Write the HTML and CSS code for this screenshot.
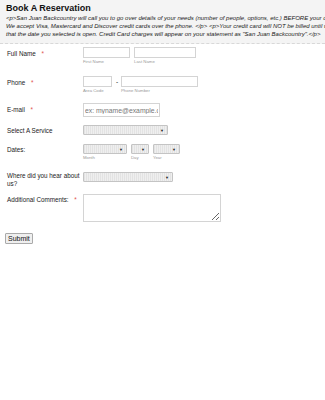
FILE: index.html
```html
<!DOCTYPE html>
<html>
<head>
<meta charset="utf-8">
<link rel="stylesheet" href="styles.css">
</head>
<body>
<div class="header">
  <h1 class="title">Book A Reservation</h1>
  <div class="desc">
    <div class="line">&lt;p&gt;San Juan Backcountry will call you to go over details of your needs (number of people, options, etc.) BEFORE your credit card is charged.</div>
    <div class="line">We accept Visa, Mastercard and Discover credit cards over the phone. &lt;/p&gt; &lt;p&gt;Your credit card will NOT be billed until we confirm</div>
    <div class="line">that the date you selected is open. Credit Card charges will appear on your statement as "San Juan Backcountry".&lt;/p&gt;</div>
  </div>
</div>
<form class="form">
  <div class="row r-name">
    <div class="label">Full Name <span class="req">*</span></div>
    <div class="field">
      <div class="sub"><input class="in in-first" type="text"><span class="sublabel">First Name</span></div>
      <div class="sub"><input class="in in-last" type="text"><span class="sublabel">Last Name</span></div>
    </div>
  </div>
  <div class="row r-phone">
    <div class="label">Phone <span class="req">*</span></div>
    <div class="field">
      <div class="sub"><input class="in in-area" type="text"><span class="sublabel">Area Code</span></div>
      <span class="dash">-</span>
      <div class="sub"><input class="in in-num" type="text"><span class="sublabel">Phone Number</span></div>
    </div>
  </div>
  <div class="row r-email">
    <div class="label">E-mail <span class="req">*</span></div>
    <div class="field">
      <input class="in in-email" type="text" placeholder="ex: myname@example.com">
    </div>
  </div>
  <div class="row r-service">
    <div class="label">Select A Service</div>
    <div class="field">
      <div class="sel sel-service"><span class="arrow">▼</span></div>
    </div>
  </div>
  <div class="row r-dates">
    <div class="label">Dates:</div>
    <div class="field">
      <div class="sub"><div class="sel sel-month"><span class="arrow">▼</span></div><span class="sublabel">Month</span></div>
      <div class="sub"><div class="sel sel-day"><span class="arrow">▼</span></div><span class="sublabel">Day</span></div>
      <div class="sub"><div class="sel sel-year"><span class="arrow">▼</span></div><span class="sublabel">Year</span></div>
    </div>
  </div>
  <div class="row r-hear">
    <div class="label">Where did you hear about us?</div>
    <div class="field">
      <div class="sel sel-hear"><span class="arrow">▼</span></div>
    </div>
  </div>
  <div class="row r-comments">
    <div class="label">Additional Comments: <span class="req">*</span></div>
    <div class="field">
      <textarea class="ta"></textarea>
    </div>
  </div>
  <div class="submit-row">
    <button type="button" class="btn">Submit</button>
  </div>
</form>
</body>
</html>
```
FILE: styles.css
```css
html, body {
  margin: 0;
  padding: 0;
  background: #fff;
  font-family: "Liberation Sans", Arial, sans-serif;
  color: #222;
}
.header {
  background: #f4f4f4;
  padding: 3px 6px 4px 6px;
  border-bottom: 1px dashed #d8d8d8;
  height: 36px;
  overflow: hidden;
}
.title {
  margin: 0;
  font-size: 9px;
  font-weight: bold;
  line-height: 11px;
  color: #111;
}
.desc {
  font-size: 6px;
  font-style: italic;
  line-height: 8px;
  color: #222;
}
.line {
  white-space: nowrap;
}
.form {
  padding: 0 0 0 7px;
}
.row {
  display: flex;
  align-items: flex-start;
}
.label {
  width: 76px;
  flex: none;
  font-size: 6.3px;
  line-height: 8px;
  color: #222;
}
.req {
  color: #e05050;
  margin-left: 4px;
}
.field {
  display: flex;
  align-items: flex-start;
}
.sub {
  display: flex;
  flex-direction: column;
  margin-right: 4px;
}
.sublabel {
  font-size: 4.3px;
  line-height: 6px;
  color: #999;
  margin-top: 1px;
}
.in {
  box-sizing: border-box;
  border: 1px solid #d4d4d4;
  height: 11px;
  padding: 0 1px;
  margin: 0;
  background: #fff;
  font-family: "Liberation Sans", Arial, sans-serif;
  font-size: 7px;
  outline: none;
}
.r-name { margin-top: 3px; height: 29px; }
.r-name .label { margin-top: 3px; }
.in-first { width: 47px; }
.in-last { width: 62px; }
.r-phone { height: 27px; }
.r-phone .label { margin-top: 3px; }
.in-area { width: 29px; }
.in-num { width: 77px; }
.r-phone .sub:first-child { margin-right: 0; }
.dash {
  font-size: 6.5px;
  width: 8px;
  text-align: center;
  line-height: 11px;
  margin: 0 0 0 1px;
}
.r-email { height: 22px; }
.r-email .label { margin-top: 3px; }
.in-email {
  width: 77px;
  height: 14px;
  font-size: 6.8px;
}
.in-email::placeholder { color: #777; }
.sel {
  box-sizing: border-box;
  height: 10px;
  border: 1px solid #c4c4c4;
  background: #e9e9e9 repeating-linear-gradient(90deg, #e3e3e3 0 1px, #efefef 1px 2px);
  position: relative;
  border-radius: 1px;
}
.arrow {
  position: absolute;
  right: 3px;
  top: 1px;
  font-size: 4px;
  line-height: 7px;
  color: #222;
}
.r-service { height: 19px; }
.r-service .label { margin-top: 2px; }
.sel-service { width: 85px; }
.r-dates { height: 28px; }
.r-dates .label { margin-top: 2px; }
.sel-month { width: 44px; }
.sel-day { width: 18px; }
.sel-year { width: 27px; }
.r-dates .sub { margin-right: 4px; }
.r-hear { height: 22px; }
.r-hear .label { margin-top: 0; }
.sel-hear { width: 90px; }
.r-comments .label { margin-top: 2px; }
.ta {
  box-sizing: border-box;
  width: 138px;
  height: 28px;
  border: 1px solid #d4d4d4;
  margin: 0;
  padding: 0;
  resize: both;
}
.submit-row {
  padding: 5px 0 0 0;
  margin-left: -2px;
}
.btn {
  font-family: "Liberation Sans", Arial, sans-serif;
  font-size: 7px;
  padding: 0 2px;
  height: 11px;
  line-height: 9px;
  border: 1px solid #aaa;
  background: #efefef;
  color: #111;
  border-radius: 1px;
}
```
